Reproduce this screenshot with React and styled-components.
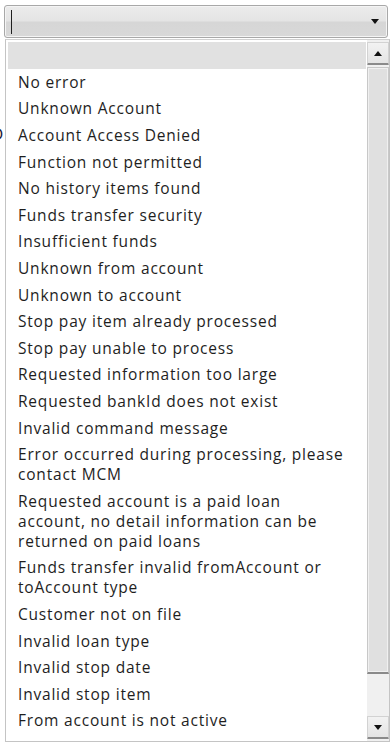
import React from 'react';
import styled, { createGlobalStyle } from 'styled-components';

const GlobalStyle = createGlobalStyle`
  html, body {
    margin: 0;
    padding: 0;
    background: #ffffff;
  }
`;

const Page = styled.div`
  position: relative;
  width: 392px;
  height: 744px;
  overflow: hidden;
  background: #ffffff;
  font-family: 'Open Sans', 'Noto Sans', sans-serif;
`;

// a letter of the form behind the open list, mostly hidden
const BehindGlyph = styled.span`
  position: absolute;
  left: -9px;
  top: 122px;
  font-family: 'Open Sans', sans-serif;
  font-size: 17px;
  color: #1a1a3a;
`;

const Combo = styled.div`
  position: relative;
  z-index: 1;
  display: flex;
  align-items: center;
  justify-content: space-between;
  height: 31px;
  margin: 5px 4px 0 4px;
  padding: 0 6px 0 6px;
  border: 1px solid #a8a8a8;
  border-radius: 3px;
  background: linear-gradient(#ececec 0%, #e4e4e4 48%, #d6d6d6 52%, #d8d8d8 100%);
  box-shadow: inset 0 0 0 1px #f4f4f4;
`;

const Caret = styled.div`
  width: 1px;
  height: 24px;
  background: #202020;
`;

const ArrowDown = styled.div`
  width: 0;
  height: 0;
  margin-right: ${({ $flush }) => ($flush ? '0' : '2px')};
  border-left: 4.5px solid transparent;
  border-right: 4.5px solid transparent;
  border-top: 5px solid #111;
`;

const ArrowUp = styled.div`
  width: 0;
  height: 0;
  border-left: 4.5px solid transparent;
  border-right: 4.5px solid transparent;
  border-bottom: 5px solid #111;
`;

const ListBox = styled.div`
  position: relative;
  z-index: 1;
  display: flex;
  box-sizing: border-box;
  width: 385px;
  height: 703px;
  margin: 1px 0 0 5px;
  border: 1px solid #c4c4c4;
  border-top-color: #d0d0d0;
  background: #ffffff;
  overflow: hidden;
`;

const Items = styled.ul`
  flex: 1;
  margin: 0;
  padding: 2px 1px 0 2px;
  list-style: none;
  overflow: hidden;
`;

const Item = styled.li`
  min-height: 20px;
  padding: 3.3px 16px 3.3px 10px;
  font-size: 15.5px;
  letter-spacing: 0.8px;
  line-height: 20px;
  color: #1e1e1e;
  background: ${({ $selected }) => ($selected ? '#e1e1e1' : 'transparent')};
`;

const ScrollBar = styled.div`
  display: flex;
  flex-direction: column;
  width: 22px;
  padding: 2px 0 2px 0;
  background: #f0f0f0;
`;

const ScrollButton = styled.div`
  display: flex;
  align-items: center;
  justify-content: center;
  box-sizing: border-box;
  height: 23px;
  border: 1px solid #d2d2d2;
  border-bottom: 2px solid #8a8a8a;
  border-radius: 1px;
  background: linear-gradient(#f2f2f2, #e4e4e4);
`;

const Thumb = styled.div`
  box-sizing: border-box;
  height: 607px;
  margin-top: 2px;
  border: 1px solid #c8c8c8;
  border-bottom: 2px solid #8a8a8a;
  box-shadow: inset 0 0 0 1px #f0f0f0;
  background: #e0e0e0;
`;

const Track = styled.div`
  flex: 1;
`;

const messages = [
  '',
  'No error',
  'Unknown Account',
  'Account Access Denied',
  'Function not permitted',
  'No history items found',
  'Funds transfer security',
  'Insufficient funds',
  'Unknown from account',
  'Unknown to account',
  'Stop pay item already processed',
  'Stop pay unable to process',
  'Requested information too large',
  'Requested bankId does not exist',
  'Invalid command message',
  'Error occurred during processing, please contact MCM',
  'Requested account is a paid loan account, no detail information can be returned on paid loans',
  'Funds transfer invalid fromAccount or toAccount type',
  'Customer not on file',
  'Invalid loan type',
  'Invalid stop date',
  'Invalid stop item',
  'From account is not active',
];

const App = () => (
  <Page>
    <GlobalStyle />
    <BehindGlyph>D</BehindGlyph>

    <Combo>
      <Caret />
      <ArrowDown />
    </Combo>

    <ListBox>
      <Items>
        {messages.map((msg, i) => (
          <Item key={i} $selected={i === 0}>
            {msg}
          </Item>
        ))}
      </Items>

      <ScrollBar>
        <ScrollButton>
          <ArrowUp />
        </ScrollButton>
        <Thumb />
        <Track />
        <ScrollButton>
          <ArrowDown $flush />
        </ScrollButton>
      </ScrollBar>
    </ListBox>
  </Page>
);

export default App;
